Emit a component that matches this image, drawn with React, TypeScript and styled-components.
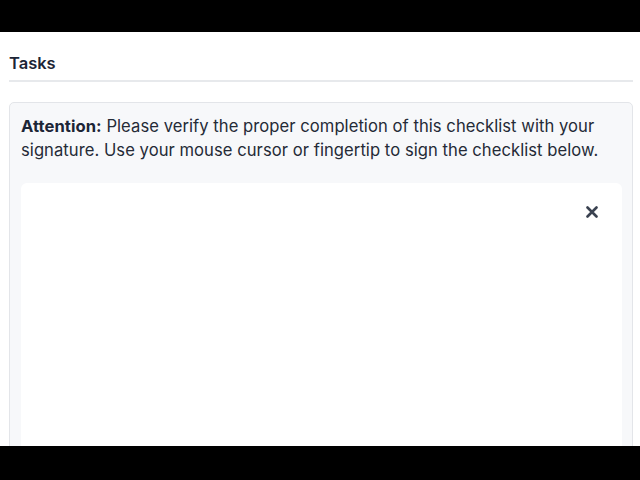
import React from 'react';
import styled, { createGlobalStyle } from 'styled-components';

const GlobalStyle = createGlobalStyle`
  html, body {
    margin: 0;
    padding: 0;
    background: #000;
  }
  * {
    box-sizing: border-box;
  }
`;

const Screen = styled.div`
  display: flex;
  flex-direction: column;
  width: 640px;
  height: 480px;
  overflow: hidden;
  font-family: Inter, 'Noto Sans', 'Liberation Sans', sans-serif;
`;

const Bar = styled.div<{ $h: number }>`
  flex: 0 0 ${({ $h }) => $h}px;
  background: #000;
`;

const Content = styled.main`
  flex: 1;
  background: #fff;
  padding: 19px 7px 0 9px;
  overflow: hidden;
`;

const Header = styled.h2`
  margin: 0;
  padding-bottom: 5px;
  border-bottom: 2px solid #e7e9ec;
  font-size: 16.5px;
  line-height: 24px;
  font-weight: 600;
  color: #1c2536;
`;

const Card = styled.section`
  margin-top: 20px;
  background: #f7f8fa;
  border: 1px solid #e3e5e9;
  border-radius: 5px;
  padding: 11px 10px 0 11px;
  height: 400px;
`;

const Notice = styled.p`
  margin: 0;
  font-size: 16.6px;
  letter-spacing: 0.05px;
  line-height: 24px;
  color: #252b37;
  font-weight: 400;

  strong {
    font-weight: 700;
    color: #1c2536;
  }
`;

const SignaturePad = styled.div`
  position: relative;
  margin-top: 21px;
  background: #fff;
  border-radius: 6px;
  height: 320px;
`;

const ClearButton = styled.button`
  position: absolute;
  top: 20px;
  right: 21px;
  width: 18px;
  height: 18px;
  padding: 0;
  border: none;
  background: transparent;
  display: flex;
  align-items: center;
  justify-content: center;
  cursor: pointer;
`;

const App = () => {
  return (
    <>
      <GlobalStyle />
      <Screen>
        <Bar $h={32} />
        <Content>
          <Header>Tasks</Header>
          <Card>
            <Notice>
              <strong>Attention:</strong> Please verify the proper completion of this checklist with your
              signature. Use your mouse cursor or fingertip to sign the checklist below.
            </Notice>
            <SignaturePad>
              <ClearButton aria-label="Clear signature">
                <svg width="12" height="12" viewBox="0 0 12 12">
                  <path d="M1.5 1.5 L10.5 10.5 M10.5 1.5 L1.5 10.5" stroke="#3a4250" strokeWidth="2.6" strokeLinecap="round" />
                </svg>
              </ClearButton>
            </SignaturePad>
          </Card>
        </Content>
        <Bar $h={34} />
      </Screen>
    </>
  );
};

export default App;
